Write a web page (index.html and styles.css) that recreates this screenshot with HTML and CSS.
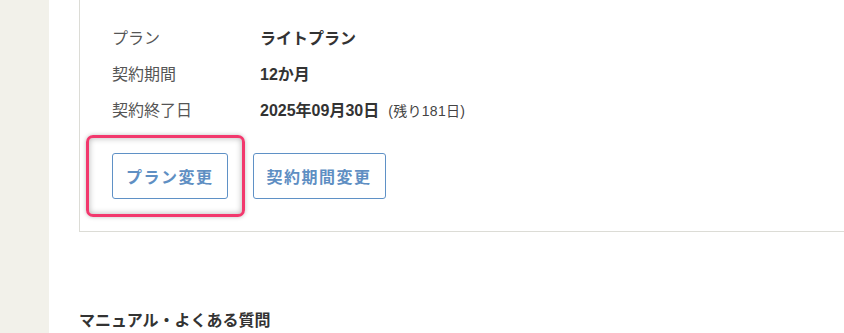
FILE: index.html
```html
<!DOCTYPE html>
<html lang="ja">
<head>
    <meta charset="UTF-8">
    <meta name="viewport" content="width=device-width, initial-scale=1.0">
    <title>契約内容</title>
    <link rel="stylesheet" href="styles.css">
</head>
<body>
    <div class="layout">
        <aside class="sidebar"></aside>

        <main class="main">
            <section class="contract">
                <dl class="contract-list">
                    <div class="row">
                        <dt>プラン</dt>
                        <dd>ライトプラン</dd>
                    </div>
                    <div class="row">
                        <dt>契約期間</dt>
                        <dd>12か月</dd>
                    </div>
                    <div class="row">
                        <dt>契約終了日</dt>
                        <dd>2025年09月30日<span class="remain">(残り181日)</span></dd>
                    </div>
                </dl>

                <div class="actions">
                    <div class="highlight-wrap">
                        <button class="btn">プラン変更</button>
                        <span class="highlight"></span>
                    </div>
                    <button class="btn">契約期間変更</button>
                </div>
            </section>

            <h2 class="section-title">マニュアル・よくある質問</h2>
        </main>
    </div>
</body>
</html>
```

FILE: styles.css
```css
body {
    margin: 0;
    font-family: "Liberation Sans", "Noto Sans CJK JP", sans-serif;
    font-size: 16px;
    color: #333;
    background-color: #fff;
}

.layout {
    display: flex;
    min-height: 333px;
}

.sidebar {
    width: 49px;
    flex-shrink: 0;
    background-color: #f2f1ea;
}

.main {
    flex: 1;
    padding-left: 30px;
    overflow: hidden;
}

.contract {
    border-left: 1px solid #dcdcd6;
    border-bottom: 1px solid #dcdcd6;
    padding: 25px 0 32px 32px;
    margin-right: -20px;
}

.contract-list {
    margin: 0;
}

.row {
    display: flex;
    align-items: baseline;
    height: 36px;
}

.row dt {
    width: 148px;
    color: #555;
    font-family: "Noto Sans CJK JP", sans-serif;
    font-size: 16px;
}

.row dd {
    margin: 0;
    font-weight: bold;
    font-size: 16px;
    color: #333;
}

.remain {
    font-weight: normal;
    font-size: 14px;
    margin-left: 9px;
    letter-spacing: 0.3px;
    color: #444;
}

.actions {
    display: flex;
    gap: 25px;
    margin-top: 20px;
}

.highlight-wrap {
    position: relative;
    display: flex;
}

.btn {
    height: 46px;
    padding: 0 13px;
    background-color: #fff;
    border: 1px solid #5f91c6;
    border-radius: 3px;
    color: #5f8fc3;
    font-family: "Noto Sans CJK JP", sans-serif;
    font-size: 16px;
    font-weight: bold;
    letter-spacing: 1.5px;
}

.highlight {
    position: absolute;
    left: -26px;
    top: -18px;
    width: 153px;
    height: 76px;
    border: 3px solid #f2386d;
    border-radius: 7px;
    box-shadow: inset 0 0 6px rgba(0, 0, 0, 0.3), 0 0 4px rgba(0, 0, 0, 0.25);
    pointer-events: none;
}

.section-title {
    margin: 75px 0 0 0;
    font-size: 16px;
    font-weight: bold;
    color: #333;
}
```
